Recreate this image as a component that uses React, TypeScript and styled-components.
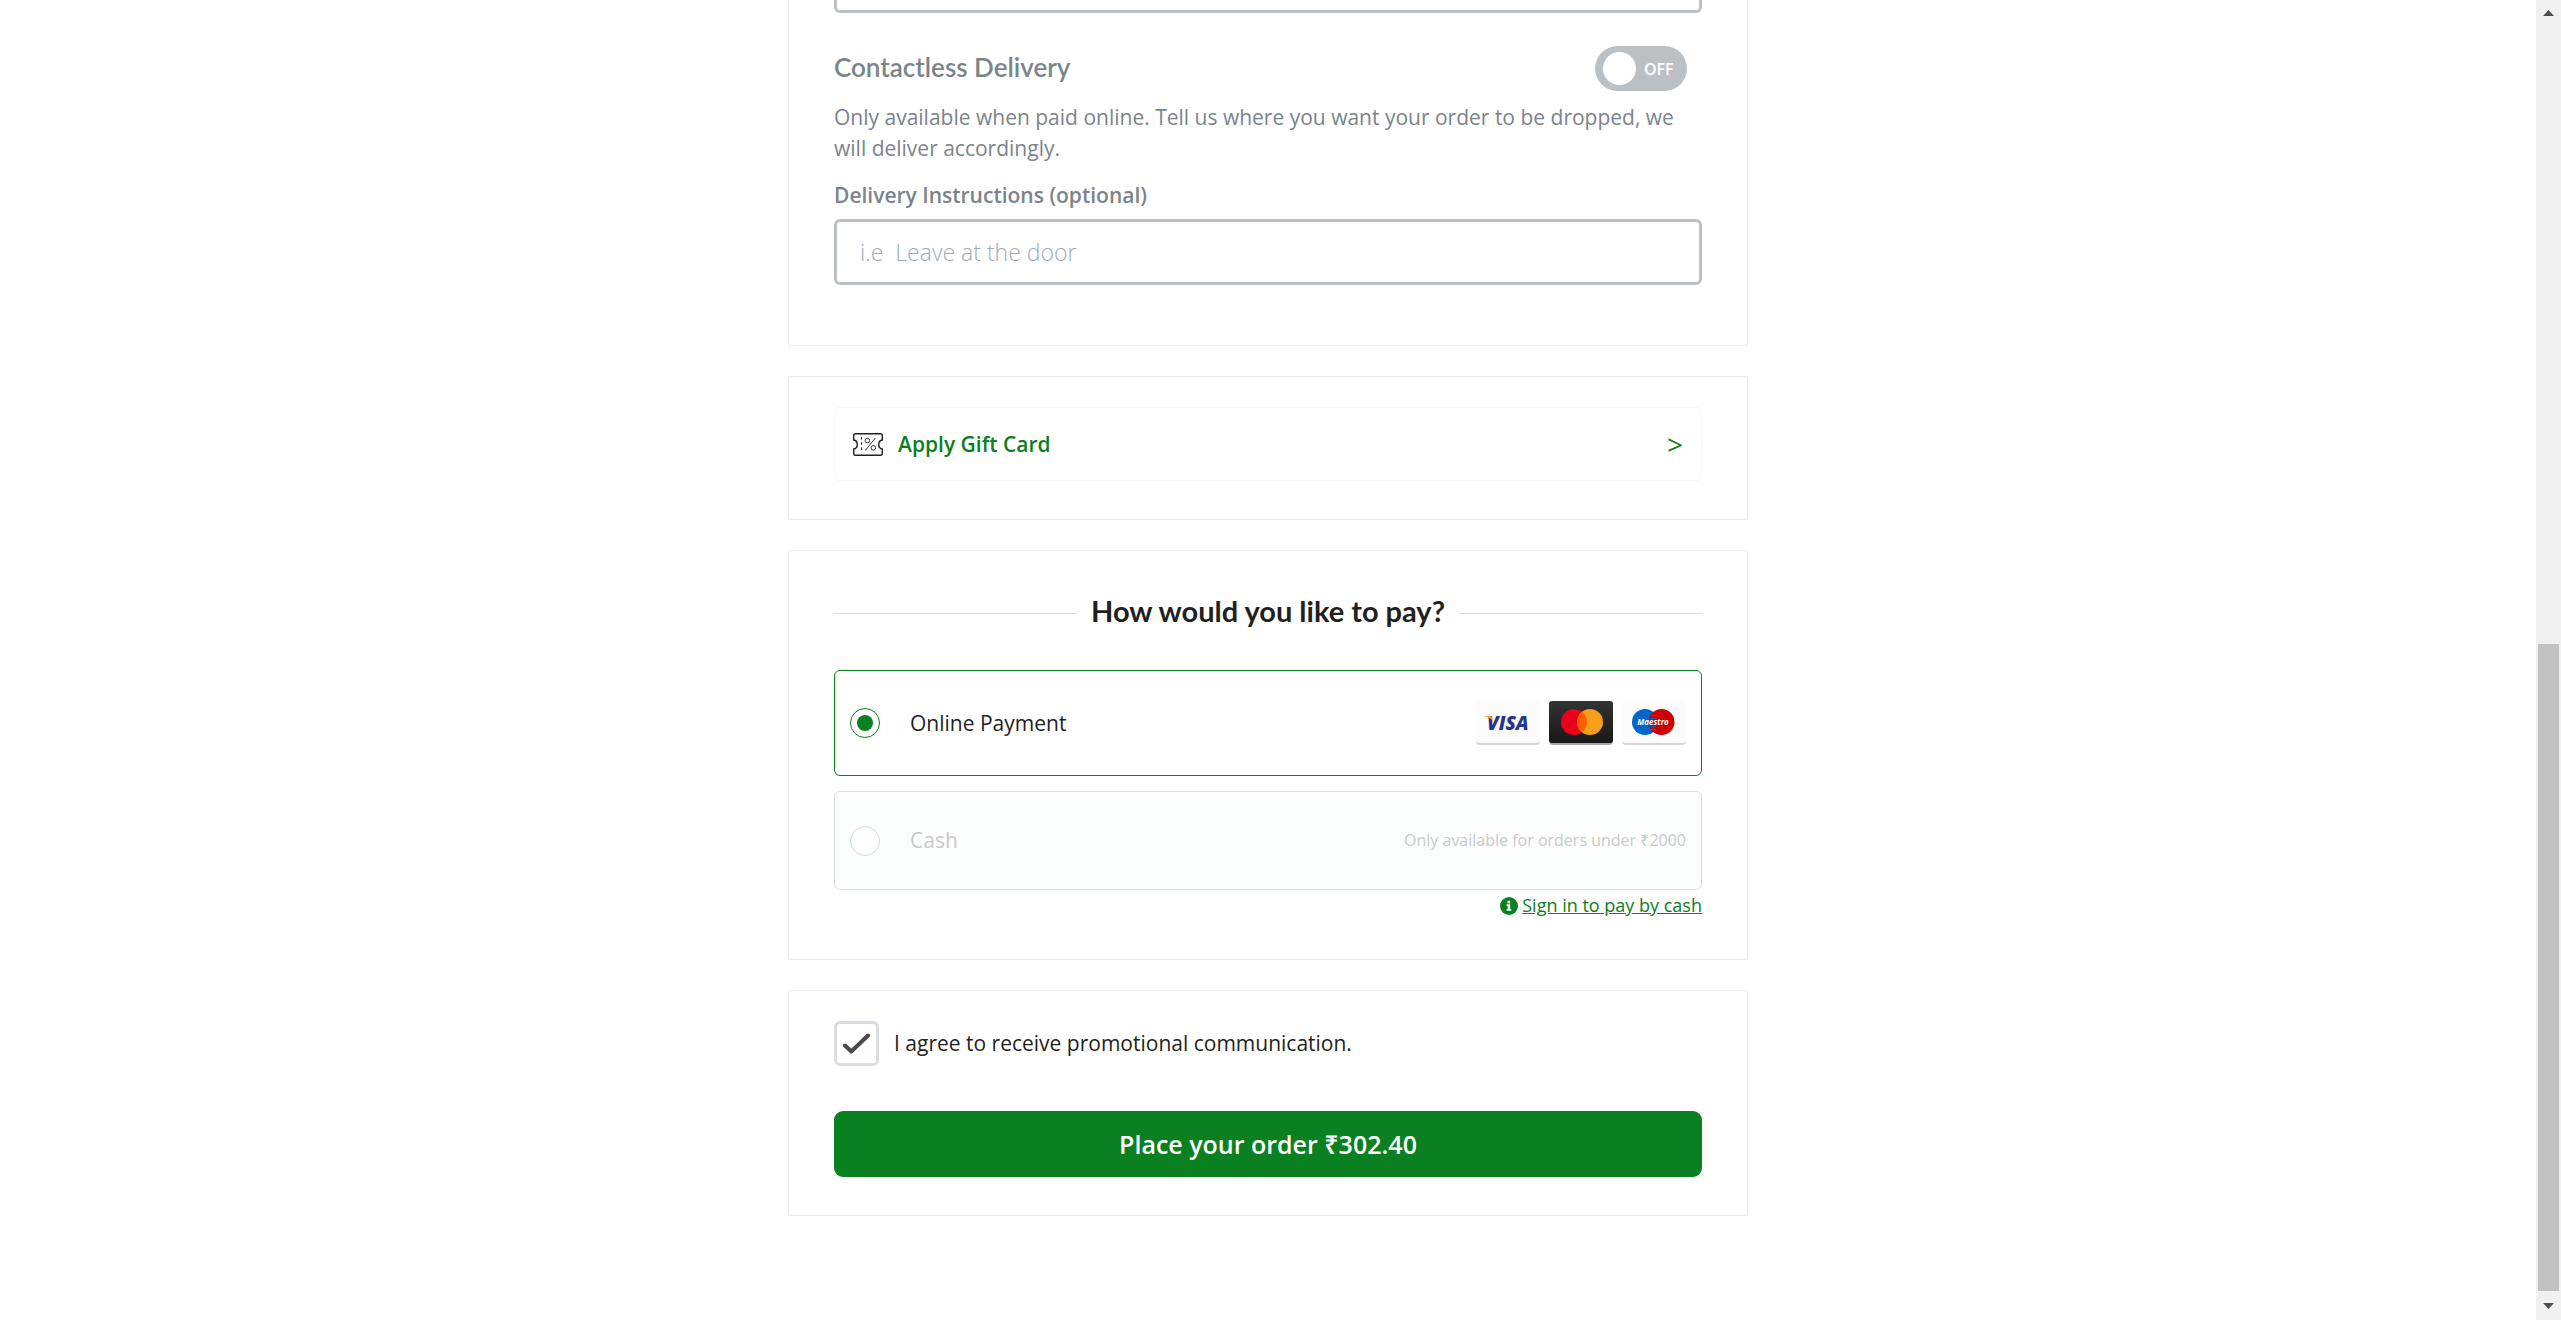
import React, { useState } from "react";
import styled, { createGlobalStyle } from "styled-components";

const green = "#0a8020";
const slate = "#7a848c";
const silver = "#bbc0c4";
const ink = "#231f20";

const GlobalStyle = createGlobalStyle`
  *, *::before, *::after { box-sizing: border-box; }
  body {
    margin: 0;
    background: #fff;
    color: ${ink};
    font-family: "Open Sans", "Noto Sans", sans-serif;
    font-size: 21px;
    line-height: 31px;
  }
  button, input { font: inherit; color: inherit; }
`;

const Shell = styled.div`
  display: flex;
  height: 100vh;
  overflow: hidden;
`;

const Main = styled.main`
  flex: 1;
  min-width: 0;
  display: flex;
  flex-direction: column;
  align-items: center;
  gap: 30px;
`;

const Card = styled.section<{ $pad: string; $open?: boolean }>`
  width: 100%;
  max-width: 960px;
  padding: ${(p) => p.$pad};
  border: 1px solid #e9eaec;
  border-radius: 3px;
  ${(p) => p.$open && "border-top: 0; border-top-left-radius: 0; border-top-right-radius: 0;"}
`;

const TextField = styled.input<{ $cut?: boolean }>`
  display: block;
  width: 100%;
  height: ${(p) => (p.$cut ? "13px" : "66px")};
  padding: 0 23px;
  border: 3px solid ${silver};
  border-radius: 6px;
  background: #fff;
  font-size: 23px;
  font-weight: 300;
  outline: none;
  ${(p) => p.$cut && "border-top: 0; border-top-left-radius: 0; border-top-right-radius: 0;"}
  &::placeholder { color: #9dabbb; opacity: 1; white-space: pre; }
`;

const SwitchRow = styled.div`
  display: flex;
  align-items: flex-start;
  justify-content: space-between;
  padding: 33px 15px 11px 0;
`;

const SubHeading = styled.h3`
  margin: 0;
  color: ${slate};
  font-family: Lato, "Open Sans", sans-serif;
  font-size: 26px;
  font-weight: 600;
  line-height: 42px;
`;

const Switch = styled.button`
  display: flex;
  align-items: center;
  gap: 8px;
  width: 92px;
  height: 45px;
  padding: 0 8px;
  border: 0;
  border-radius: 23px;
  background: ${silver};
  color: #fff;
  font-size: 16px;
  font-weight: 600;
  line-height: 20px;
`;

const Knob = styled.span`
  flex: none;
  width: 33px;
  height: 33px;
  border-radius: 50%;
  background: #fff;
`;

const Hint = styled.p`
  margin: 0 0 16px;
  color: ${slate};
`;

const FieldLabel = styled.label`
  display: block;
  margin-bottom: 8px;
  color: ${slate};
  font-weight: 600;
`;

const GiftButton = styled.button`
  display: flex;
  align-items: center;
  gap: 15px;
  width: 100%;
  height: 74px;
  padding: 0 18px;
  border: 1px solid #f7f7f8;
  border-radius: 6px;
  background: #fff;
  color: ${green};
  font-weight: 600;
  text-align: left;
`;

const Chevron = styled.span`
  font-size: 28px;
  font-weight: 500;
`;

const Grow = styled.span`
  flex: 1;
`;

const Title = styled.h2`
  display: flex;
  align-items: center;
  gap: 15px;
  margin: 0 0 44px;
  font-family: Lato, "Open Sans", sans-serif;
  font-size: 29px;
  font-weight: 700;
  line-height: 30px;
  &::before, &::after {
    content: "";
    flex: 1;
    height: 1px;
    margin-top: 4px;
    background: #d9dcdb;
  }
`;

const Option = styled.label<{ $height: string; $off?: boolean }>`
  display: flex;
  align-items: center;
  height: ${(p) => p.$height};
  padding: 0 15px;
  border: 1px solid ${(p) => (p.$off ? "#dbdfdd" : green)};
  border-radius: 6px;
  background: ${(p) => (p.$off ? "#fcfefd" : "#fff")};
  color: ${(p) => (p.$off ? "#c9c9c9" : ink)};
`;

const Options = styled.div`
  display: grid;
  gap: 15px;
`;

const Radio = styled.input`
  appearance: none;
  display: grid;
  place-items: center;
  flex: none;
  width: 30px;
  height: 30px;
  margin: 0 30px 0 0;
  border: 1px solid ${green};
  border-radius: 50%;
  background: #fff;
  &:checked::before {
    content: "";
    width: 16px;
    height: 16px;
    border-radius: 50%;
    background: ${green};
  }
  &:disabled { border-color: #c5e0ca; }
`;

const Note = styled.span`
  font-size: 16px;
`;

const Logos = styled.span`
  display: flex;
  gap: 9px;
`;

const SignIn = styled.div`
  display: flex;
  align-items: center;
  justify-content: flex-end;
  gap: 4px;
  font-size: 18px;
`;

const Link = styled.a`
  color: ${green};
  text-decoration: underline;
`;

const Consent = styled.label`
  display: flex;
  align-items: center;
  gap: 15px;
`;

const CheckWrap = styled.span`
  display: grid;
  width: 45px;
  height: 45px;
  & > * { grid-area: 1 / 1; }
  svg { place-self: center; pointer-events: none; }
`;

const CheckBox = styled.input`
  appearance: none;
  width: 45px;
  height: 45px;
  margin: 0;
  border: 3px solid #d9dde3;
  border-radius: 6px;
  background: #fff;
`;

const PlaceOrder = styled.button`
  width: 100%;
  height: 66px;
  margin-top: 45px;
  border: 0;
  border-radius: 9px;
  background: ${green};
  color: #fff;
  font-size: 25px;
  font-weight: 600;
`;

const Track = styled.div`
  display: flex;
  flex-direction: column;
  align-items: center;
  width: 25px;
  height: 100vh;
  background: #f0f0f0;
`;

const TrackSpace = styled.div`
  flex: 619;
`;

const Thumb = styled.div`
  flex: 647;
  width: 21px;
  background: #c1c1c1;
`;

const ArrowBox = styled.div<{ $tall?: boolean }>`
  display: grid;
  place-items: center;
  height: ${(p) => (p.$tall ? "29px" : "25px")};
`;

const TicketIcon = () => (
  <svg width="30" height="23" viewBox="0 0 30 23" fill="none" aria-hidden="true">
    <path
      d="M2.300.700h25.400a1.600 1.600 0 0 1 1.600 1.600v4.700c-2 .3-3.600 2.200-3.600 4.500s1.600 4.200 3.600 4.500v4.700a1.600 1.600 0 0 1-1.600 1.600H2.300a1.600 1.600 0 0 1-1.600-1.600V16c2-.3 3.600-2.200 3.600-4.500S2.700 7.300.7 7V2.300A1.600 1.600 0 0 1 2.300.700Z"
      stroke={ink}
      strokeWidth="1.4"
    />
    <path d="M8.500 4v15" stroke={ink} strokeDasharray="2.600 2.600" />
    <path d="M22.400 5 12.200 17.600" stroke={ink} strokeWidth=".9" />
    <circle cx="14.400" cy="7.600" r="2.300" stroke={ink} strokeWidth=".9" />
    <circle cx="20.400" cy="14.800" r="2.300" stroke={ink} strokeWidth=".9" />
  </svg>
);

const LightCard = () => (
  <>
    <rect y="3" width="64" height="41" rx="4" fill="#d6d6d6" />
    <rect width="64" height="42" rx="3" fill="#fbfbfb" />
  </>
);

const VisaLogo = () => (
  <svg width="64" height="44" viewBox="0 0 64 44" role="img" aria-label="Visa">
    <LightCard />
    <text
      x="11"
      y="29"
      fill="#26338f"
      fontFamily="Open Sans, sans-serif"
      fontSize="19"
      fontWeight="800"
      fontStyle="italic"
    >
      VISA
    </text>
    <path d="M8 15h6.300c1.600.1 1.900 1.200 2.200 2.800L17 21c-1.200-3-4.100-5.100-9-5.700z" fill="#f6a01c" />
  </svg>
);

const MastercardLogo = () => (
  <svg width="64" height="44" viewBox="0 0 64 44" role="img" aria-label="Mastercard">
    <defs>
      <linearGradient id="mc" x1="0" y1="0" x2="0" y2="1">
        <stop offset="0" stopColor="#333" />
        <stop offset="1" stopColor="#181818" />
      </linearGradient>
    </defs>
    <rect y="3" width="64" height="41" rx="4" fill="#a8a8a8" />
    <rect width="64" height="42" rx="3" fill="url(#mc)" />
    <circle cx="25" cy="21" r="13" fill="#eb001b" />
    <circle cx="41" cy="21" r="13" fill="#f79e1b" />
    <path d="M33 10.750a13 13 0 0 1 0 20.500 13 13 0 0 1 0-20.500z" fill="#ff5f00" />
  </svg>
);

const MaestroLogo = () => (
  <svg width="64" height="44" viewBox="0 0 64 44" role="img" aria-label="Maestro">
    <LightCard />
    <circle cx="23" cy="21" r="13" fill="#0066cb" />
    <circle cx="39.500" cy="21" r="13" fill="#cc0000" />
    <path d="M29 14.500h5M28 17.500h6M28 25.500h6M29 28.500h5" stroke="#0066cb" />
    <text
      x="31"
      y="24"
      textAnchor="middle"
      fill="#fff"
      fontFamily="Open Sans, sans-serif"
      fontSize="8"
      fontWeight="700"
      fontStyle="italic"
    >
      Maestro
    </text>
  </svg>
);

const InfoIcon = () => (
  <svg width="18" height="18" viewBox="0 0 18 18" aria-hidden="true">
    <circle cx="9" cy="9" r="9" fill={green} />
    <path d="M7.500 3.700h2.700v2.600H7.500zM6.600 7.300h3.600v4.900h1.100v1.600H6.600v-1.600h1.100V8.900H6.600z" fill="#fff" />
  </svg>
);

const Tick = () => (
  <svg width="27" height="21" viewBox="0 0 27 21" fill="none" aria-hidden="true">
    <path d="M2 12.500 8.300 18.500 25 2.500" stroke="#4a4a4c" strokeWidth="4" strokeLinecap="round" strokeLinejoin="round" />
  </svg>
);

const Arrow = ({ down }: { down?: boolean }) => (
  <svg width="11" height="6" viewBox="0 0 11 6" aria-hidden="true">
    <path d={down ? "M0 0h11L5.500 6z" : "M0 6h11L5.500 0z"} fill="#4f4f4f" />
  </svg>
);

export default function App() {
  const [contactless, setContactless] = useState(false);
  const [agree, setAgree] = useState(true);
  return (
    <>
      <GlobalStyle />
      <Shell>
        <Main>
          <Card $open $pad="0 45px 60px">
            <TextField $cut aria-label="Order notes" />
            <SwitchRow>
              <SubHeading id="contactless">Contactless Delivery</SubHeading>
              <Switch
                type="button"
                role="switch"
                aria-checked={contactless}
                aria-labelledby="contactless"
                onClick={() => setContactless(!contactless)}
              >
                <Knob />
                {contactless ? "ON" : "OFF"}
              </Switch>
            </SwitchRow>
            <Hint>
              Only available when paid online. Tell us where you want your order to be dropped, we will deliver
              accordingly.
            </Hint>
            <FieldLabel htmlFor="instructions">Delivery Instructions (optional)</FieldLabel>
            <TextField id="instructions" placeholder="i.e  Leave at the door" />
          </Card>

          <Card $pad="30px 45px 38px">
            <GiftButton type="button">
              <TicketIcon />
              <Grow>Apply Gift Card</Grow>
              <Chevron>&gt;</Chevron>
            </GiftButton>
          </Card>

          <Card $pad="45px 45px 38px">
            <Title>How would you like to pay?</Title>
            <Options>
              <Option $height="106px">
                <Radio type="radio" name="payment" defaultChecked />
                <Grow>Online Payment</Grow>
                <Logos>
                  <VisaLogo />
                  <MastercardLogo />
                  <MaestroLogo />
                </Logos>
              </Option>
              <Option $height="99px" $off>
                <Radio type="radio" name="payment" disabled />
                <Grow>Cash</Grow>
                <Note>Only available for orders under ₹2000</Note>
              </Option>
            </Options>
            <SignIn>
              <InfoIcon />
              <Link href="#sign-in">Sign in to pay by cash</Link>
            </SignIn>
          </Card>

          <Card $pad="30px 45px 38px">
            <Consent>
              <CheckWrap>
                <CheckBox type="checkbox" checked={agree} onChange={() => setAgree(!agree)} />
                {agree && <Tick />}
              </CheckWrap>
              I agree to receive promotional communication.
            </Consent>
            <PlaceOrder type="button">Place your order ₹302.40</PlaceOrder>
          </Card>
        </Main>
        <Track aria-hidden="true">
          <ArrowBox>
            <Arrow />
          </ArrowBox>
          <TrackSpace />
          <Thumb />
          <ArrowBox $tall>
            <Arrow down />
          </ArrowBox>
        </Track>
      </Shell>
    </>
  );
}
